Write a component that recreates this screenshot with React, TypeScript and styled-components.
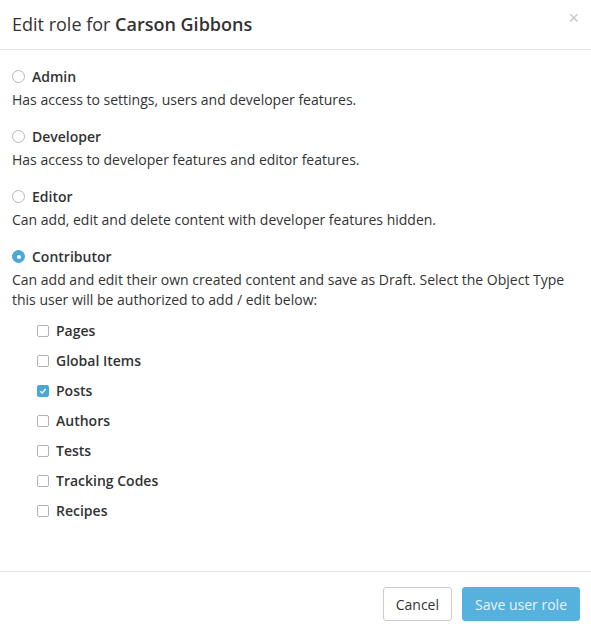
import React, { useState } from "react";
import styled, { createGlobalStyle } from "styled-components";

const GlobalStyle = createGlobalStyle`
  html, body {
    margin: 0;
    padding: 0;
    background: #fff;
  }
  body {
    font-family: "Open Sans", "Noto Sans", sans-serif;
    color: #333;
    -webkit-font-smoothing: antialiased;
  }
`;

const Modal = styled.div`
  width: 591px;
  height: 633px;
  display: flex;
  flex-direction: column;
  box-sizing: border-box;
  background: #fff;
`;

const Header = styled.div`
  height: 50px;
  box-sizing: border-box;
  display: flex;
  align-items: center;
  justify-content: space-between;
  padding: 0 12px 2px 12px;
  border-bottom: 1px solid #e5e5e5;
`;

const Title = styled.h4`
  margin: 0;
  font-size: 18px;
  font-weight: 400;
  color: #333;
  b {
    font-weight: 600;
  }
`;

const Close = styled.button`
  border: 0;
  background: none;
  padding: 0;
  margin-top: -12px;
  color: #c8c8c8;
  font-size: 18px;
  line-height: 1;
  cursor: pointer;
`;

const Body = styled.div`
  flex: 1;
  padding: 16px 12px 0 12px;
  display: flex;
  flex-direction: column;
  gap: 16px;
`;

const Role = styled.div`
  display: flex;
  flex-direction: column;
  gap: 4px;
`;

const RoleLabel = styled.label`
  display: flex;
  align-items: center;
  height: 20px;
  font-size: 14px;
  font-weight: 600;
  cursor: pointer;
`;

const Radio = styled.span<{ $checked: boolean }>`
  width: 13px;
  height: 13px;
  box-sizing: border-box;
  border-radius: 50%;
  margin: 1px 7px 0 0;
  display: inline-flex;
  align-items: center;
  justify-content: center;
  border: 1px solid ${({ $checked }) => ($checked ? "#4aa8d8" : "#b8b8b8")};
  background: ${({ $checked }) => ($checked ? "#4aa8d8" : "#fff")};
  &::after {
    content: "";
    width: 4px;
    height: 4px;
    border-radius: 50%;
    background: #fff;
    display: ${({ $checked }) => ($checked ? "block" : "none")};
  }
`;

const Description = styled.p`
  margin: 0;
  font-size: 14px;
  line-height: 20px;
  color: #333;
`;

const TypeList = styled.ul`
  list-style: none;
  margin: 6px 0 0 0;
  padding: 0 0 0 25px;
  display: flex;
  flex-direction: column;
  gap: 10px;
`;

const TypeItem = styled.li`
  display: flex;
  align-items: center;
  height: 20px;
  font-size: 14px;
  font-weight: 600;
  cursor: pointer;
`;

const Checkbox = styled.span<{ $checked: boolean }>`
  width: 12px;
  height: 12px;
  box-sizing: border-box;
  border-radius: 2px;
  margin: 1px 7px 0 0;
  display: inline-flex;
  align-items: center;
  justify-content: center;
  border: 1px solid ${({ $checked }) => ($checked ? "#4aa8d8" : "#b3b3b3")};
  background: ${({ $checked }) => ($checked ? "#4aa8d8" : "#fff")};
`;

const Footer = styled.div`
  border-top: 1px solid #e5e5e5;
  padding: 15px 11px 12px 0;
  display: flex;
  justify-content: flex-end;
  gap: 10px;
`;

const Button = styled.button<{ $primary?: boolean }>`
  height: 34px;
  box-sizing: border-box;
  padding: 0 12px;
  border-radius: 3px;
  font-family: "Open Sans", "Noto Sans", sans-serif;
  font-size: 14px;
  cursor: pointer;
  border: 1px solid ${({ $primary }) => ($primary ? "#56b1dc" : "#ccc")};
  background: ${({ $primary }) => ($primary ? "#56b1dc" : "#fff")};
  color: ${({ $primary }) => ($primary ? "#e6f4fb" : "#333")};
`;

const roles = [
  { name: "Admin", desc: "Has access to settings, users and developer features." },
  { name: "Developer", desc: "Has access to developer features and editor features." },
  { name: "Editor", desc: "Can add, edit and delete content with developer features hidden." },
  {
    name: "Contributor",
    desc: "Can add and edit their own created content and save as Draft. Select the Object Type this user will be authorized to add / edit below:",
  },
];

const types = ["Pages", "Global Items", "Posts", "Authors", "Tests", "Tracking Codes", "Recipes"];

const App = () => {
  const [role, setRole] = useState("Contributor");
  const [checked, setChecked] = useState<string[]>(["Posts"]);

  const toggle = (t: string) =>
    setChecked((prev) => (prev.includes(t) ? prev.filter((x) => x !== t) : [...prev, t]));

  return (
    <>
      <GlobalStyle />
      <Modal>
        <Header>
          <Title>
            Edit role for <b>Carson Gibbons</b>
          </Title>
          <Close aria-label="Close">×</Close>
        </Header>
        <Body>
          {roles.map((r) => (
            <Role key={r.name}>
              <RoleLabel onClick={() => setRole(r.name)}>
                <Radio $checked={role === r.name} />
                {r.name}
              </RoleLabel>
              <Description>{r.desc}</Description>
              {r.name === "Contributor" && role === "Contributor" ? (
                <TypeList>
                  {types.map((t) => (
                    <TypeItem key={t} onClick={() => toggle(t)}>
                      <Checkbox $checked={checked.includes(t)}>
                        {checked.includes(t) ? (
                          <svg width="8" height="8" viewBox="0 0 8 8">
                            <path d="M1.3 4.2 L3.2 6 L6.7 2" fill="none" stroke="#fff" strokeWidth="1.4" />
                          </svg>
                        ) : null}
                      </Checkbox>
                      {t}
                    </TypeItem>
                  ))}
                </TypeList>
              ) : null}
            </Role>
          ))}
        </Body>
        <Footer>
          <Button>Cancel</Button>
          <Button $primary>Save user role</Button>
        </Footer>
      </Modal>
    </>
  );
};

export default App;
